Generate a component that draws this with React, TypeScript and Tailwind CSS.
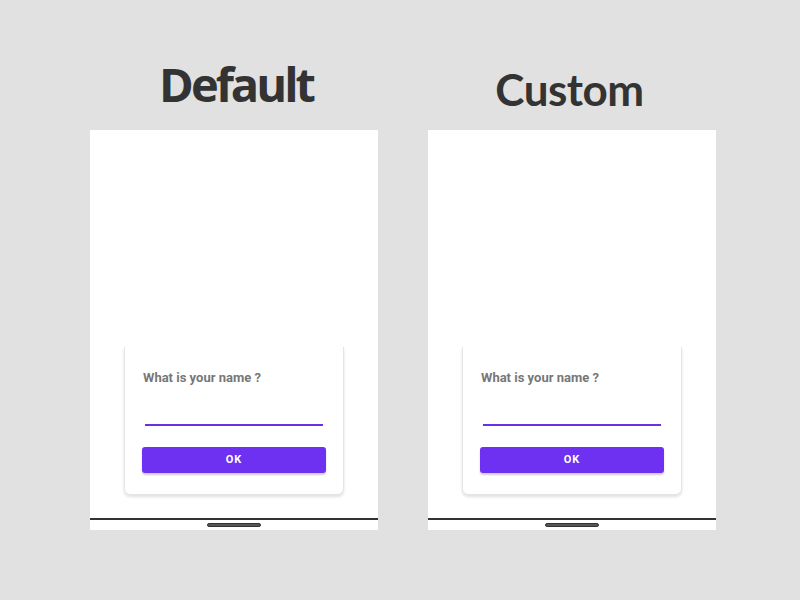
import React from "react";

const Panel = ({
  title,
  titleClass,
}: {
  title: string;
  titleClass: string;
}) => {
  return (
    <div className="flex flex-col items-center w-[288px]">
      <div className="h-[130px] w-full flex justify-center">
        <span className={`text-[#333333] font-bold leading-none ${titleClass}`}>
          {title}
        </span>
      </div>
      <div className="flex flex-col justify-end w-[288px] h-[400px] bg-white">
        <div className="mx-[34px] h-[148px] rounded-b-[6px] border-x border-b border-[#e4e4e4] shadow-[0_2px_3px_rgba(0,0,0,0.12)] px-[17px] pt-[22px]">
          <div className="pl-[1px] text-[13px] font-bold text-[#777777] leading-[18px] font-['Roboto',sans-serif]">
            What is your name ?
          </div>
          <div className="mt-[37px] ml-[3px] mr-[3px] h-[2px] bg-[#6a2ee6]" />
          <button className="mt-[21px] w-full h-[26px] rounded-[3px] bg-[#6e31f2] shadow-[0_2px_2px_rgba(0,0,0,0.2)] text-white text-[11px] font-bold tracking-[1px] font-['Roboto',sans-serif]">
            OK
          </button>
        </div>
        <div className="mt-[23px] h-[2px] bg-[#333333]" />
        <div className="h-[10px] flex items-center justify-center">
          <div className="w-[54px] h-[4px] rounded-full bg-[#555555] border border-[#333333]" />
        </div>
      </div>
    </div>
  );
};

const App = () => {
  return (
    <div className="w-[800px] h-[600px] bg-[#e1e1e1] flex pl-[90px] gap-[50px]">
      <Panel
        title="Default"
        titleClass="mt-[61px] ml-[4px] text-[47px] tracking-[-3px] font-['Open_Sans',sans-serif]"
      />
      <Panel
        title="Custom"
        titleClass="mt-[67px] mr-[5px] text-[44px] tracking-[-0.5px] font-['Lato',sans-serif]"
      />
    </div>
  );
};

export default App;
